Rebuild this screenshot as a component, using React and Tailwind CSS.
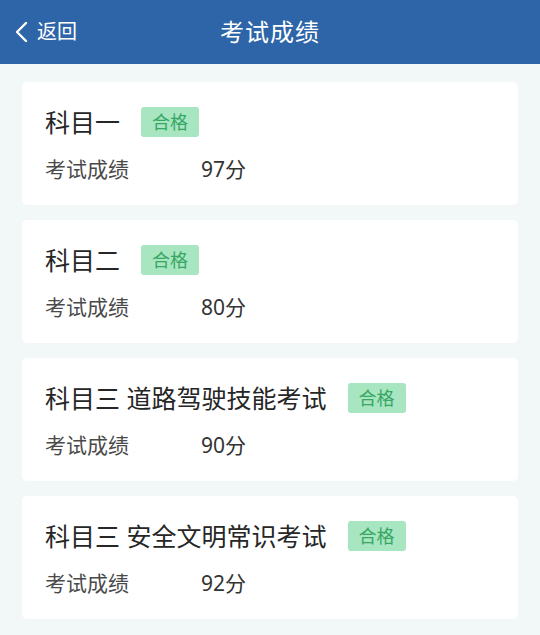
const results = [
  { name: "科目一", score: 97 },
  { name: "科目二", score: 80 },
  { name: "科目三 道路驾驶技能考试", score: 90 },
  { name: "科目三 安全文明常识考试", score: 92 },
];

const App = () => {
  return (
    <div
      className="min-h-[635px] bg-[#f2f7f8]"
      style={{ fontFamily: '"Noto Sans", "Noto Sans CJK SC", sans-serif' }}
    >
      <div className="relative h-16 bg-[#2d65a8] flex items-center justify-center text-white">
        <div className="absolute left-[14px] top-0 h-full flex items-center">
          <svg width="16" height="22" viewBox="0 0 16 22" fill="none">
            <path d="M12 2 L3 11 L12 20" stroke="white" strokeWidth="2.4" strokeLinecap="round" strokeLinejoin="round" />
          </svg>
          <span className="ml-[7px] text-[20px] leading-none">返回</span>
        </div>
        <h1 className="text-[24px] leading-none tracking-[1px]">考试成绩</h1>
      </div>
      <div className="px-[22px] pt-[18px] flex flex-col gap-[15px]">
        {results.map((r) => (
          <div key={r.name} className="bg-white rounded-[5px] h-[123px] pl-[23px] pt-[24px]">
            <div className="flex items-center h-[32px]">
              <span className="text-[25px] text-[#262626] leading-none">{r.name}</span>
              <span className="ml-[21px] h-[30px] w-[58px] flex items-center justify-center rounded-[3px] bg-[#a8e5c1] text-[#37a764] text-[18px] leading-none">
                合格
              </span>
            </div>
            <div className="flex items-center mt-[18px] h-[26px] text-[21px] leading-none">
              <span className="w-[156px] text-[#4a4a4a]">考试成绩</span>
              <span className="text-[#333333]">{r.score}分</span>
            </div>
          </div>
        ))}
      </div>
    </div>
  );
};

export default App;
